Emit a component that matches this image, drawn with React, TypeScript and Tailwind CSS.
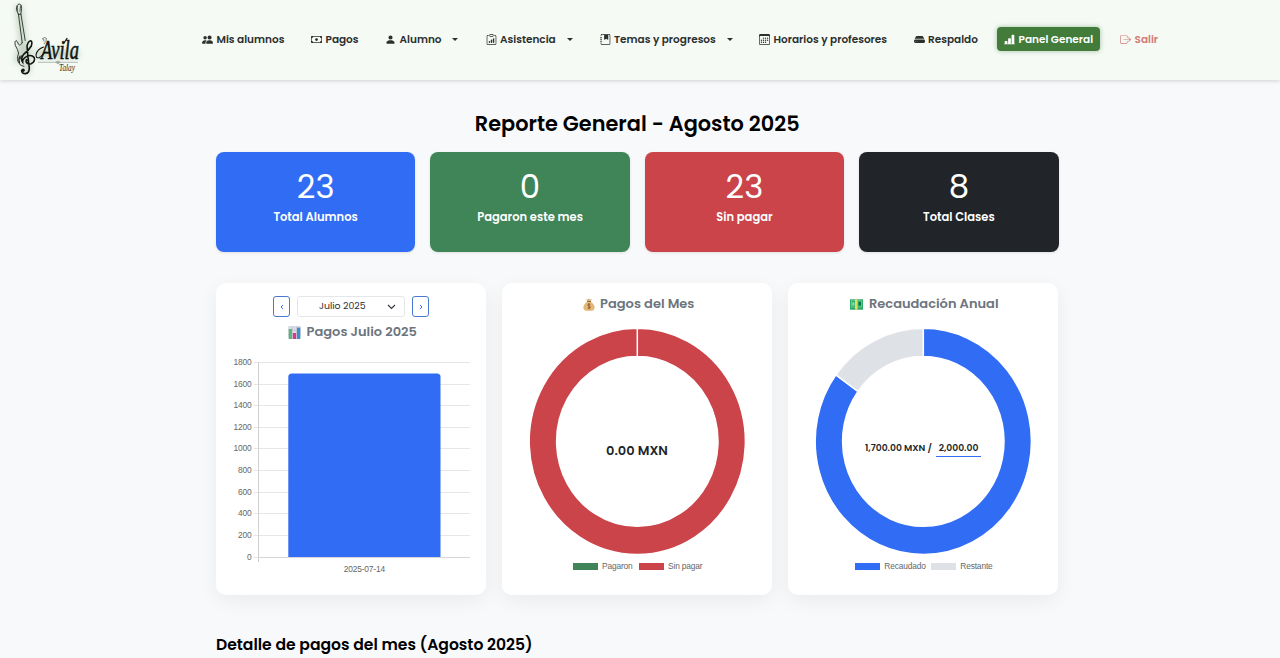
import type { ReactNode } from "react";
import {
  BsBarChartLineFill,
  BsBoxArrowRight,
  BsCalendar3,
  BsCash,
  BsClipboardData,
  BsHddFill,
  BsJournalBookmarkFill,
  BsPeopleFill,
  BsPersonFill,
} from "react-icons/bs";

function Logo() {
  return (
    <svg width="96" height="80" viewBox="0 0 96 80" fill="none" className="shrink-0">
      <defs>
        <filter id="glow" x="-30%" y="-30%" width="160%" height="160%">
          <feGaussianBlur stdDeviation="3" />
        </filter>
      </defs>
      <g filter="url(#glow)" opacity="0.4" stroke="#7d9a78" strokeWidth="7" strokeLinecap="round">
        <path d="M19 8 L23 42 L18 60 M27 48 V70 M38 54 H76" />
      </g>
      <g stroke="#263026" strokeWidth="0.9" strokeLinecap="round" strokeLinejoin="round">
        <path d="M18.3 14 L16.4 9.5 Q16.4 4.5 19.2 4 Q22 4.2 21.6 8.4 L20.8 14 Z" />
        <path d="M17.4 6 V11 M20.5 6 L20 11" strokeWidth="0.7" />
        <path d="M18.4 14 L22.2 42.5" />
        <path d="M20.9 14 L25.2 40.5" />
        <path d="M22.2 42.5 Q20.5 46.5 18.6 44.4 Q17.3 40.7 16 40.5 Q14.3 41 15.2 45.2 Q17.8 49.5 18.6 53 Q17 57 17.8 61 Q19.2 65.8 24 66.6" />
        <path d="M20 56 Q17.8 59.5 19.6 63 M22 55.5 L20 58.8" strokeWidth="1.1" />
      </g>
      <g stroke="#101510" strokeLinecap="round">
        <path
          d="M28.3 60.5 Q25.7 58.5 26.1 61.6 Q27.1 64.7 31.1 63.7 Q35.6 61.7 34.2 57.6 Q31.6 54.4 27.3 56.1 Q22.3 58.6 22.6 62 Q20.4 59 23.6 54.4 Q29 50 31.3 46 Q32.7 41.5 30.7 40.8 Q28.3 40.9 27 46 Q27.8 56 29.3 68.4 Q29.1 73.2 25.5 73.6 Q21.8 73.6 21.6 70.7"
          strokeWidth="1.6"
        />
        <circle cx="23" cy="70.2" r="1.8" fill="#101510" stroke="none" />
      </g>
      <path d="M38 62.3 H78" stroke="#9aa59a" strokeWidth="0.7" />
      <path d="M55 62.3 L58 60.4 L61 62.3 L58 64.2 Z" fill="#a2ada2" />
      <path
        d="M42.5 38.6 Q44.8 36.5 46.4 38.4 Q47 41.2 44.2 43.8 M42.8 38.8 Q44.5 38.6 44 41.2"
        stroke="#5a655a"
        strokeWidth="0.8"
        strokeLinecap="round"
      />
      <path
        d="M45 52 Q41.5 56.5 39.2 57.6 Q35.6 58.6 36.1 54.3 Q37.4 49.2 43.6 47"
        stroke="#101510"
        strokeWidth="1.1"
        strokeLinecap="round"
      />
      <text
        x="41"
        y="58.5"
        fontSize="28"
        textLength="38"
        lengthAdjust="spacingAndGlyphs"
        className="fill-[#101510] font-['Liberation_Serif',serif] italic"
        stroke="#101510"
        strokeWidth="0.6"
      >
        Avila
      </text>
      <path d="M64 43 L67 38.4" stroke="#101510" strokeWidth="1.2" strokeLinecap="round" />
      <text
        x="59"
        y="71"
        fontSize="10"
        textLength="16"
        lengthAdjust="spacingAndGlyphs"
        className="fill-[#263026] font-['Liberation_Serif',serif] italic"
      >
        Talay
      </text>
    </svg>
  );
}

function NavItem({
  icon,
  label,
  width,
  caret,
  className = "",
}: {
  icon: ReactNode;
  label: string;
  width: string;
  caret?: boolean;
  className?: string;
}) {
  return (
    <a className={`flex h-6 items-center text-[10.5px] font-semibold whitespace-nowrap text-[#2b2f2e] ${className}`}>
      <span className="mr-[3.5px] flex w-[11px] shrink-0 justify-center text-[11px]">{icon}</span>
      <span className={`${width} shrink-0 pt-px`}>{label}</span>
      {caret && (
        <span className="ml-[11px] h-0 w-0 border-x-[3px] border-t-[3px] border-x-transparent border-t-[#2b2f2e]" />
      )}
    </a>
  );
}

function Stat({ value, label, className }: { value: string; label: string; className: string }) {
  return (
    <div className={`flex h-[100px] flex-col items-center rounded-lg text-white shadow-[0_1px_3px_rgba(0,0,0,0.1)] ${className}`}>
      <div className="mt-[15px] text-[32.4px] leading-[40px] font-normal">{value}</div>
      <div className="mt-0.5 text-[11.5px] leading-4 font-semibold">{label}</div>
    </div>
  );
}

function ChartCard({ children }: { children: ReactNode }) {
  return (
    <section className="flex h-[312px] flex-col items-center rounded-[10px] bg-white shadow-[0_6px_20px_rgba(0,0,0,0.06)]">
      {children}
    </section>
  );
}

function CardTitle({ icon, children }: { icon: ReactNode; children: ReactNode }) {
  return (
    <h2 className="flex h-5 items-center gap-[5.5px] pl-[3px] text-[13px] font-semibold whitespace-nowrap text-[#6c757d]">
      {icon}
      <span>{children}</span>
    </h2>
  );
}

function ChartEmoji() {
  return (
    <svg width="13" height="13" viewBox="0 0 13 13">
      <rect width="13" height="13" rx="1" fill="#d9dce3" />
      <path d="M0 4.3H13M0 8.6H13M4.3 0V13M8.6 0V13" stroke="#c0b6cf" strokeWidth="0.6" />
      <rect x="0.8" y="3" width="3.2" height="10" fill="#5bb779" />
      <rect x="4.9" y="7" width="3.2" height="6" fill="#d33a8e" />
      <rect x="9" y="1.6" width="3.2" height="11.4" fill="#3c8fcb" />
    </svg>
  );
}

function MoneyBagEmoji() {
  return (
    <svg width="12" height="13" viewBox="0 0 12 13">
      <path d="M4.2 3.3 L3.1 1.2 L5 1.5 L6 0.2 L7 1.5 L8.9 1.2 L7.8 3.3 Z" fill="#cfb47e" />
      <path d="M4.4 3.4 H7.6 Q11.6 6.3 11.6 9.5 Q11.6 12.6 8.5 12.7 H3.5 Q.4 12.6 .4 9.5 Q.4 6.3 4.4 3.4Z" fill="#e3b774" />
      <path d="M4 3.5H8" stroke="#8b6339" strokeWidth="0.9" />
      <path
        d="M7.3 6.5 Q6 5.4 4.9 6.5 Q4.5 7.8 6 8.1 Q7.7 8.5 7.2 9.8 Q6 11 4.7 9.8 M6 5.3V11.1"
        fill="none"
        stroke="#8b5a33"
        strokeWidth="0.9"
      />
    </svg>
  );
}

function BanknoteEmoji() {
  return (
    <svg width="13" height="13" viewBox="0 0 13 13">
      <g transform="translate(0 1)">
        <rect width="13" height="10.4" y="0.3" fill="#29a765" />
        <rect x="0.9" y="1.3" width="11.2" height="7.2" fill="#6ccf93" />
        <rect x="1.8" y="2.1" width="9.4" height="5.6" fill="#2fae68" />
        <ellipse cx="3.4" cy="5" rx="1.2" ry="1.9" fill="#8bdba9" />
        <rect x="5" y="0.3" width="2.6" height="10.4" fill="#e2dc62" />
        <rect x="8.8" y="3" width="2" height="3.4" fill="#0a6b3e" />
      </g>
    </svg>
  );
}

const TICKS = [1800, 1600, 1400, 1200, 1000, 800, 600, 400, 200, 0];

function BarChart() {
  const top = 12.5;
  const step = 21.62;
  return (
    <svg
      width="270"
      height="236"
      viewBox="0 0 270 236"
      className="font-['Liberation_Sans',Arial,sans-serif] text-[8.4px] tracking-[-0.15px]"
    >
      {TICKS.map((tick, i) => {
        const y = Math.round(top + i * step - 0.5) + 0.5;
        return (
          <g key={tick}>
            <path d={`M37.5 ${y} H254`} stroke="#e6e6e6" />
            <text x="35.5" y={y + 2.5} textAnchor="end" fill="#666">
              {tick}
            </text>
          </g>
        );
      })}
      <path d="M42.5 12 V212" stroke="#cfcfcf" />
      <path d="M42 207.5 H254" stroke="#d6d6da" />
      <path d="M72.3 207 V27 Q72.3 23.5 75.8 23.5 H221 Q224.5 23.5 224.5 27 V207 Z" fill="#316cf4" />
      <text x="148.3" y="222" textAnchor="middle" fill="#666">
        2025-07-14
      </text>
    </svg>
  );
}

const OUTER = { rx: 108.1, ry: 113.1 };
const INNER = { rx: 80.7, ry: 84.9 };
const CX = 109.3;
const CY = 113.4;

function segment(from: number, to: number) {
  const pt = (f: number, r: { rx: number; ry: number }) => {
    const a = f * Math.PI * 2 - Math.PI / 2;
    return `${(CX + Math.cos(a) * r.rx).toFixed(2)} ${(CY + Math.sin(a) * r.ry).toFixed(2)}`;
  };
  const large = to - from > 0.5 ? 1 : 0;
  return `M${pt(from, OUTER)} A${OUTER.rx} ${OUTER.ry} 0 ${large} 1 ${pt(to, OUTER)} L${pt(to, INNER)} A${INNER.rx} ${INNER.ry} 0 ${large} 0 ${pt(from, INNER)} Z`;
}

function Donut({ parts, children }: { parts: { from: number; to: number; color: string }[]; children: ReactNode }) {
  return (
    <div className="mt-[14px] grid h-[227px] w-[218px] place-items-center">
      <svg width="218" height="227" viewBox="0 0 218 227" className="col-start-1 row-start-1">
        {parts.map((p) => (
          <path key={p.from} d={segment(p.from, p.to)} fill={p.color} stroke="#fff" strokeWidth="1.5" />
        ))}
      </svg>
      <div className="z-10 col-start-1 row-start-1">{children}</div>
    </div>
  );
}

function Legend({ items }: { items: { label: string; swatch: string; width: string }[] }) {
  return (
    <div className="mt-1.5 flex gap-[7px] font-['Liberation_Sans',Arial,sans-serif] text-[8.4px] leading-[10px] tracking-[-0.15px] text-[#666]">
      {items.map((item) => (
        <div key={item.label} className="flex items-center gap-[4.5px]">
          <span className={`h-[7px] w-[25px] ${item.swatch}`} />
          <span className={`whitespace-nowrap ${item.width}`}>{item.label}</span>
        </div>
      ))}
    </div>
  );
}

function StepButton({ children }: { children: ReactNode }) {
  return (
    <button className="flex h-[21px] w-[17px] items-center justify-center rounded-[3px] border border-[#4a7ad0] text-[#316cf4]">
      {children}
    </button>
  );
}

export default function App() {
  return (
    <div className="h-[658px] overflow-hidden bg-[#f8f9fb] font-[Poppins,Inter,sans-serif]">
      <header className="flex h-20 items-center bg-[#f5faf5] shadow-[0_1px_4px_rgba(0,0,0,0.16)]">
        <Logo />
        <nav className="ml-[106px] flex items-center pb-0.5">
          <NavItem icon={<BsPeopleFill />} label="Mis alumnos" width="w-[67.5px]" />
          <NavItem className="ml-[27px]" icon={<BsCash />} label="Pagos" width="w-[33.5px]" />
          <NavItem className="ml-[26px]" icon={<BsPersonFill />} label="Alumno" width="w-[41px]" caret />
          <NavItem className="ml-[28px]" icon={<BsClipboardData />} label="Asistencia" width="w-[55.5px]" caret />
          <NavItem className="ml-[27px]" icon={<BsJournalBookmarkFill />} label="Temas y progresos" width="w-[101.5px]" caret />
          <NavItem className="ml-[26.5px]" icon={<BsCalendar3 />} label="Horarios y profesores" width="w-[113px]" />
          <NavItem className="ml-[27px]" icon={<BsHddFill />} label="Respaldo" width="w-[50.5px]" />
          <NavItem
            className="ml-[18.5px] w-[103px] rounded-[4px] bg-[#437b3a] pl-[7px] text-white! shadow-[0_0_5px_rgba(67,123,58,0.45)]"
            icon={<BsBarChartLineFill />}
            label="Panel General"
            width="w-[74px]"
          />
          <NavItem className="ml-5 text-[#d37a74]!" icon={<BsBoxArrowRight />} label="Salir" width="w-[24px]" />
        </nav>
      </header>

      <main className="ml-[216px] w-[842.5px] pt-[31px]">
        <h1 className="text-center text-[20.85px] leading-[26px] font-semibold text-black">Reporte General - Agosto 2025</h1>

        <div className="mt-[15px] grid grid-cols-4 gap-x-[15.2px]">
          <Stat value="23" label="Total Alumnos" className="bg-[#316cf4]" />
          <Stat value="0" label="Pagaron este mes" className="bg-[#408558]" />
          <Stat value="23" label="Sin pagar" className="bg-[#ca444a]" />
          <Stat value="8" label="Total Clases" className="bg-[#212529]" />
        </div>

        <div className="mt-[31px] grid w-[842px] grid-cols-3 gap-x-4">
          <ChartCard>
            <div className="mt-[13px] flex gap-[7px]">
              <StepButton>
                <svg width="4" height="6" viewBox="0 0 4 6" fill="none" stroke="currentColor">
                  <path d="M3 1 L1 3 L3 5" />
                </svg>
              </StepButton>
              <div className="flex h-[21px] w-[108px] items-center rounded-[3px] border border-[#e4e7ea] pr-2 pl-[21px] text-[9.4px] text-[#2b2f33]">
                <span className="grow">Julio 2025</span>
                <svg width="9" height="6" viewBox="0 0 9 6" fill="none" stroke="#343a40" strokeWidth="1.2">
                  <path d="M1 1 L4.5 4.5 L8 1" />
                </svg>
              </div>
              <StepButton>
                <svg width="4" height="6" viewBox="0 0 4 6" fill="none" stroke="currentColor">
                  <path d="M1 1 L3 3 L1 5" />
                </svg>
              </StepButton>
            </div>
            <div className="mt-[5px]">
              <CardTitle icon={<ChartEmoji />}>Pagos Julio 2025</CardTitle>
            </div>
            <div className="mt-2">
              <BarChart />
            </div>
          </ChartCard>

          <ChartCard>
            <div className="mt-[11px]">
              <CardTitle icon={<MoneyBagEmoji />}>Pagos del Mes</CardTitle>
            </div>
            <Donut parts={[{ from: 0, to: 0.99999, color: "#ca444a" }]}>
              <span className="block pt-[18px] text-[13px] leading-5 font-semibold text-[#212529]">0.00 MXN</span>
            </Donut>
            <Legend
              items={[
                { label: "Pagaron", swatch: "bg-[#408558]", width: "w-[29.5px]" },
                { label: "Sin pagar", swatch: "bg-[#ca444a]", width: "w-[33.5px]" },
              ]}
            />
          </ChartCard>

          <ChartCard>
            <div className="mt-[11px]">
              <CardTitle icon={<BanknoteEmoji />}>Recaudación Anual</CardTitle>
            </div>
            <Donut
              parts={[
                { from: 0, to: 0.85, color: "#316cf4" },
                { from: 0.85, to: 1, color: "#dee2e6" },
              ]}
            >
              <div className="flex items-start gap-1 pt-[13px] text-[9.2px] leading-[17px] font-semibold whitespace-nowrap text-[#212529]">
                <span className="w-[67px]">1,700.00 MXN /</span>
                <span className="w-[45px] border-b border-[#316cf4] text-center">2,000.00</span>
              </div>
            </Donut>
            <Legend
              items={[
                { label: "Recaudado", swatch: "bg-[#316cf4]", width: "w-[39.5px]" },
                { label: "Restante", swatch: "bg-[#dee2e6]", width: "w-[31px]" },
              ]}
            />
          </ChartCard>
        </div>

        <h2 className="mt-[38px] text-[15.6px] leading-6 font-semibold text-black">Detalle de pagos del mes (Agosto 2025)</h2>
      </main>
    </div>
  );
}
